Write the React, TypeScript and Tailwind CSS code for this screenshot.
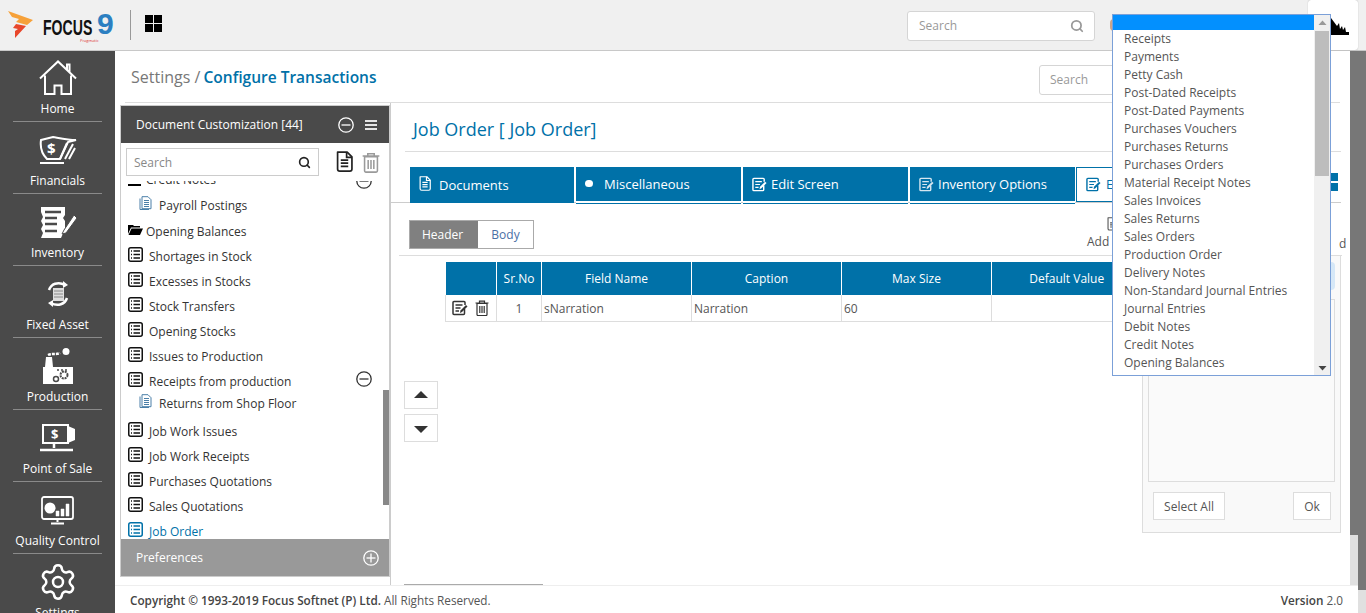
import { Settings, Search } from 'lucide-react'

const BLUE = 'bg-[#0071a8]'

const dropdownItems = [
  'Receipts', 'Payments', 'Petty Cash', 'Post-Dated Receipts', 'Post-Dated Payments', 'Purchases Vouchers',
  'Purchases Returns', 'Purchases Orders', 'Material Receipt Notes', 'Sales Invoices', 'Sales Returns', 'Sales Orders',
  'Production Order', 'Delivery Notes', 'Non-Standard Journal Entries', 'Journal Entries', 'Debit Notes', 'Credit Notes',
  'Opening Balances',
]

function ListIcon({ color = '#111' }: { color?: string }) {
  return (
    <svg width="15" height="15" viewBox="0 0 15 15" fill="none" stroke={color} className="shrink-0">
      <rect x="0.75" y="0.75" width="13.5" height="13.5" rx="2" strokeWidth="1.5" />
      <path d="M3 4h1M3 7.500h1M3 11h1M5.500 4H12M5.500 7.500H12M5.500 11H12" strokeWidth="1.3" />
    </svg>
  )
}

function PageIcon({ color = '#4a7fa8' }: { color?: string }) {
  return (
    <svg width="13" height="15" viewBox="0 0 13 15" fill="none" stroke={color} className="shrink-0">
      <path d="M1 13.500h9M1 13.500V2.500M3 .7h6l3 3v9H3z" strokeWidth="1" fill="#fff" />
      <path d="M5 4.500h5M5 6.500h5M5 8.500h5M5 10.500h5" strokeWidth="1" />
    </svg>
  )
}

function CircleSign({ plus = false, color = '#fff', size = 16 }: { plus?: boolean; color?: string; size?: number }) {
  return (
    <svg width={size} height={size} viewBox="0 0 16 16" fill="none" stroke={color} strokeWidth="1.3">
      <circle cx="8" cy="8" r="7.2" />
      <path d="M3.500 8h9" />
      {plus && <path d="M8 3.500v9" />}
    </svg>
  )
}

function DocIcon({ color = '#fff', size = 16 }: { color?: string; size?: number }) {
  return (
    <svg width={size} height={size * 1.25} viewBox="0 0 16 20" fill="none" stroke={color} strokeWidth="1.6">
      <path d="M1.500 1h9l4.500 4.500V17a2 2 0 0 1-2 2H3.500a2 2 0 0 1-2-2z" strokeLinejoin="round" />
      <path d="M10 1v5h5M4.500 8.500h7M4.500 11.500h7M4.500 14.500h7" />
    </svg>
  )
}

function EditIcon({ color = '#fff', size = 15 }: { color?: string; size?: number }) {
  return (
    <svg width={size} height={size} viewBox="0 0 16 16" fill="none" stroke={color}>
      <path d="M12.500 9v4.500a1 1 0 0 1-1 1H2a1 1 0 0 1-1-1V2.500a1 1 0 0 1 1-1h10a1 1 0 0 1 1 1V5" strokeWidth="1.5" />
      <path d="M3.500 5h7M3.500 8h5M3.500 11h3.500" strokeWidth="1.3" />
      <path d="M8 13l.5-2.500L14 5l1.500 1.500L10 12z" fill={color} stroke="none" />
    </svg>
  )
}

function TrashIcon({ color = '#333', width = 14, height = 16 }: { color?: string; width?: number; height?: number }) {
  return (
    <svg width={width} height={height} viewBox="0 0 14 16" fill="none" stroke={color}>
      <path d="M.5 3h13M4.500 3V1.200h5V3" strokeWidth="1.200" />
      <path d="M2 3.500h10v11a1 1 0 0 1-1 1H3a1 1 0 0 1-1-1z" strokeWidth="1.200" />
      <path d="M4.800 6v7M7 6v7M9.200 6v7" strokeWidth="1.200" />
    </svg>
  )
}

function NavIcon({ name }: { name: string }) {
  if (name === 'Home')
    return (
      <svg width="38" height="36" viewBox="0 0 38 36" fill="none" stroke="#fff" strokeWidth="2">
        <path d="M1 18.500 19 1.500l18 17M28 10V4.500h2.500V12M6 15.500V34h9.500v-8.500h7V34H32V15.500" />
      </svg>
    )
  if (name === 'Financials')
    return (
      <svg width="38" height="32" viewBox="0 0 38 32" fill="none">
        <path d="M2 6 14 3c6 1 15 3 23 3l-8 2-8 17H8C3 20 1 13 2 6z" stroke="#fff" strokeWidth="2" />
        <path d="M21 25 28 9M26 25l8-15M30 25l6-11" stroke="#fff" strokeWidth="2" />
        <text x="8" y="20" fill="#fff" fontSize="15" fontWeight="700" fontFamily="Open Sans">$</text>
        <path d="M1 29h24" stroke="#fff" strokeWidth="2" />
      </svg>
    )
  if (name === 'Inventory')
    return (
      <svg width="38" height="33" viewBox="0 0 38 33" fill="none">
        <path d="M2 1h24v8l-2 3 2 3v8l-4 9H2l2-5-2-4 2-4-2-4 2-4-2-5z" fill="#fff" />
        <path d="M6 6h16M6 12h12M6 18h12M6 25h12" stroke="#4a4a4a" strokeWidth="2.500" />
        <path d="M25 24 35 9l3 3-11 15-4 1z" fill="#fff" stroke="#4a4a4a" />
      </svg>
    )
  if (name === 'Fixed Asset')
    return (
      <svg width="24" height="28" viewBox="0 0 24 28" fill="none">
        <path d="M3 10C5 4 12 1 19 5M21 18c-2 6-9 9-16 5" stroke="#fff" strokeWidth="2.500" />
        <path d="M17 1l5 4-5 3zM7 27l-5-4 5-3z" fill="#fff" />
        <rect x="7" y="8" width="11" height="13" fill="#ddd" />
        <path d="M8 11h9M8 14h9M8 17h9" stroke="#888" />
      </svg>
    )
  if (name === 'Production')
    return (
      <svg width="30" height="36" viewBox="0 0 30 36" fill="none">
        <path d="M5 7c4-2 8 0 12-2" stroke="#fff" strokeWidth="2.500" strokeDasharray="3 1" />
        <circle cx="23" cy="3.500" r="3.500" fill="#fff" />
        <path d="M3 9h6l1 10h20v17H0V19h2z" fill="#fff" />
        <circle cx="21" cy="27" r="3.500" stroke="#4a4a4a" strokeWidth="2" strokeDasharray="2 .8" />
        <circle cx="13" cy="31" r="2.500" stroke="#4a4a4a" strokeWidth="1.500" />
        <path d="M14 22h2M18 22h2M22 22h2" stroke="#4a4a4a" strokeWidth="1.500" />
      </svg>
    )
  if (name === 'Point of Sale')
    return (
      <svg width="36" height="28" viewBox="0 0 36 28" fill="none">
        <rect x="3" y="1" width="25" height="18" stroke="#fff" strokeWidth="2" />
        <path d="M28 2l7 3v11l-7 3z" fill="#fff" />
        <path d="M14 20v4M0 26h33" stroke="#fff" strokeWidth="2.500" />
        <text x="11" y="15" fill="#fff" fontSize="13" fontWeight="700" fontFamily="Open Sans">$</text>
      </svg>
    )
  if (name === 'Quality Control')
    return (
      <svg width="33" height="29" viewBox="0 0 33 29" fill="none">
        <rect x="1" y="1" width="31" height="22" rx="2" stroke="#fff" strokeWidth="1.800" />
        <circle cx="9" cy="12" r="5.500" fill="#fff" />
        <path d="M9 12h5.500M15 20v-5h3v5zM20 20v-7h3v7zM25 20V8h3v12z" fill="#fff" stroke="#fff" strokeWidth=".5" />
        <path d="M16.500 23v3M10 27.500h13" stroke="#fff" strokeWidth="2" />
      </svg>
    )
  return <Settings size={40} color="#fff" strokeWidth={1.5} />
}

const navItems = ['Home', 'Financials', 'Inventory', 'Fixed Asset', 'Production', 'Point of Sale', 'Quality Control', 'Settings']

const treeItems: { label: string; kind: 'list' | 'page' | 'folder'; minus?: boolean; active?: boolean; extra?: string }[] = [
  { label: 'Payroll Postings', kind: 'page', extra: 'mb-[1px]' },
  { label: 'Opening Balances', kind: 'folder' },
  { label: 'Shortages in Stock', kind: 'list' },
  { label: 'Excesses in Stocks', kind: 'list' },
  { label: 'Stock Transfers', kind: 'list' },
  { label: 'Opening Stocks', kind: 'list' },
  { label: 'Issues to Production', kind: 'list' },
  { label: 'Receipts from production', kind: 'list', minus: true },
  { label: 'Returns from Shop Floor', kind: 'page', extra: '-mt-[3px] mb-[3px]' },
  { label: 'Job Work Issues', kind: 'list' },
  { label: 'Job Work Receipts', kind: 'list' },
  { label: 'Purchases Quotations', kind: 'list' },
  { label: 'Sales Quotations', kind: 'list' },
  { label: 'Job Order', kind: 'list', active: true },
]

function TreeRow({ item }: { item: (typeof treeItems)[number] }) {
  return (
    <div className={`flex items-center relative h-[25px] ${item.extra ?? ''} ${item.kind === 'page' ? 'pl-[18px]' : 'pl-[7px]'} ${item.active ? 'text-[#0071a8]' : 'text-[#333]'}`}>
      {item.kind === 'list' && <ListIcon color={item.active ? '#0071a8' : '#111'} />}
      {item.kind === 'page' && <PageIcon />}
      {item.kind === 'folder' && (
        <svg width="15" height="11" viewBox="0 0 15 11" className="shrink-0">
          <path d="M0 1h5l1 1h6v1.500H3L0 10zM3.500 4.500H15L12 11H.5z" fill="#000" />
        </svg>
      )}
      <span className={`pt-[5px] ${item.kind === 'folder' ? 'ml-[3px]' : item.kind === 'page' ? 'ml-[7px]' : 'ml-[6px]'}`}>{item.label}</span>
      {item.minus && (
        <span className="absolute right-[17px] top-[4px]">
          <CircleSign color="#333" />
        </span>
      )}
    </div>
  )
}

const tabs = [
  { label: 'Miscellaneous', icon: <span className="block w-[8px] h-[7px] -mt-[2px] rounded-full bg-white" />, gap: 'ml-[11px]' },
  { label: 'Edit Screen', icon: <EditIcon />, gap: 'ml-[4px]' },
  { label: 'Inventory Options', icon: <EditIcon color="#d5e6f0" />, gap: 'ml-[4px]' },
]

export default function App() {
  return (
    <div className="relative flex flex-col w-[1366px] h-[613px] overflow-hidden bg-white text-[12px] text-[#555] font-['Open_Sans',sans-serif]">
      <header className="flex items-center h-[51px] shrink-0 bg-[#f0f0f0] border-b border-[#c8c8c8]">
        <svg width="26" height="28" viewBox="0 0 26 28" className="ml-[8px] -mt-[1px] shrink-0">
          <path d="M0 0l25 9-6 5-11-3 3-3-7-2z" fill="#f6a13a" />
          <path d="M8 13l10 2-11 12 0-7 3-2-5-1z" fill="#e8472b" />
        </svg>
        <div className="relative flex items-center w-[87px] ml-[9px] h-[40px] leading-none">
          <span className="block w-[49px] mt-[6px] font-['Liberation_Sans',sans-serif] font-bold text-[22px] text-[#111] scale-x-[0.64] origin-left whitespace-nowrap">FOCUS</span>
          <span className="block ml-[5px] -mt-[3px] font-['Liberation_Sans',sans-serif] font-bold text-[30px] text-[#2c7fc1]">9</span>
          <span className="absolute left-[37px] top-[34px] text-[4px] text-[#d33] whitespace-nowrap">Pragmatic</span>
        </div>
        <div className="w-px h-[30px] bg-[#999]" />
        <div className="grid grid-cols-2 gap-[1px] ml-[14px] -mt-[3px]">
          <span className="w-[8px] h-[8px] bg-black" />
          <span className="w-[8px] h-[8px] bg-black" />
          <span className="w-[8px] h-[8px] bg-black" />
          <span className="w-[8px] h-[8px] bg-black" />
        </div>
        <div className="ml-[745px] flex items-center justify-between w-[188px] h-[30px] mt-[1px] pl-[11px] pr-[10px] bg-white border border-[#d5d5d5] rounded-[3px] text-[#999]">
          <span className="pt-[1px]">Search</span>
          <Search size={14} strokeWidth={3} color="#999" />
        </div>
        <span className="ml-[15px] w-[8px] h-[12px] rounded-full bg-[#c9a48a]" />
        <div className="ml-auto mr-[8px] w-[50px] h-[50px] flex items-end justify-end pb-[14px] pr-[8px] bg-white rounded-[3px] shadow-[0_0_1px_#999]">
          <svg width="22" height="24" viewBox="0 0 22 24">
            <path d="M0 23V2l6 8 3 4 2-3 1 6 2-3 1 4 2-3 1 5 3 0v3z" fill="#000" />
          </svg>
        </div>
      </header>

      <div className="flex flex-1 min-h-0">
        <aside className="w-[115px] shrink-0 bg-[#4a4a4a] overflow-hidden text-white text-[12px]">
          <div className="-mt-[1px]">
            {navItems.map((name) => (
              <div key={name} className="flex flex-col items-center h-[72px] mx-[13px] border-b border-[#8a8a8a]">
                <div className="flex items-center justify-center h-[50px] pt-[6px]">
                  <NavIcon name={name} />
                </div>
                <span className="leading-[18px] whitespace-nowrap">{name}</span>
              </div>
            ))}
          </div>
        </aside>

        <div className="flex flex-col flex-1 min-w-0">
          <div className="flex flex-1 min-h-0">
            <main className="flex flex-col w-[1235px] shrink-0 min-h-0">
              <div className="flex items-center justify-between h-[52px] shrink-0 mx-[10px] pl-[6px] border-b border-[#ddd]">
                <div className="text-[16px] pt-[1px]">
                  <span className="text-[#777]">Settings / </span>
                  <span className="text-[#0071a8] font-semibold text-[15.5px] -ml-[1px]">Configure Transactions</span>
                </div>
                <div className="flex items-center w-[200px] h-[30px] pt-[1px] px-[10px] mr-[101px] mt-[6px] border border-[#d5d5d5] rounded-[3px] text-[#999]">Search</div>
              </div>

              <div className="flex flex-1 min-h-0">
                <section className="flex flex-col w-[270px] h-[472px] ml-[5px] mt-[2px] shrink-0 border border-[#ccc]">
                  <div className="flex items-center h-[37px] shrink-0 pl-[15px] pr-[12px] bg-[#4a4a4a] text-white">
                    <span className="pt-[1px]">Document Customization [44]</span>
                    <span className="ml-auto"><CircleSign /></span>
                    <span className="ml-[11px] flex flex-col gap-[2px]">
                      <i className="block w-[12px] h-[2px] bg-[#e5e5e5]" />
                      <i className="block w-[12px] h-[2px] bg-[#e5e5e5]" />
                      <i className="block w-[12px] h-[2px] bg-[#e5e5e5]" />
                    </span>
                  </div>
                  <div className="flex items-center h-[38px] shrink-0 pl-[5px]">
                    <div className="flex items-center justify-between w-[193px] h-[28px] px-[7px] border border-[#ccc] text-[#888]">
                      <span className="pt-[1px]">Search</span>
                      <Search size={13} strokeWidth={3} color="#222" />
                    </div>
                    <span className="ml-[17px]"><DocIcon color="#222" size={17} /></span>
                    <span className="ml-[9px]"><TrashIcon color="#9a9a9a" width={18} height={21} /></span>
                  </div>
                  <div className="relative flex-1 min-h-0 overflow-hidden">
                    <div className="absolute right-0 top-[209px] w-[6px] h-[115px] bg-[#888]" />
                    <div className="absolute top-[-11px] left-[7px] right-0 flex items-center h-[20px]">
                      <span className="block w-[13px] h-[2px] mt-[9px] bg-black" />
                      <span className="ml-[5px] text-[#333] whitespace-nowrap">Credit Notes</span>
                    </div>
                    <span className="absolute right-[17px] top-[-8px]"><CircleSign color="#333" /></span>
                    <div className="pt-[10px]">
                      {treeItems.map((item) => (
                        <TreeRow key={item.label} item={item} />
                      ))}
                    </div>
                  </div>
                  <div className="flex items-center justify-between h-[37px] shrink-0 pl-[15px] pr-[10px] bg-[#999] text-white">
                    <span className="pt-[1px]">Preferences</span>
                    <CircleSign plus />
                  </div>
                </section>

                <div className="flex flex-col flex-1 min-w-0 border-l border-[#ccc]">
                  <div className="flex items-center h-[49px] shrink-0 ml-[14px] mr-[9px] pl-[8px] pt-[4px] border-b border-[#ddd] text-[18px] text-[#0071a8]">
                    Job Order [ Job Order]
                  </div>

                  <div className="flex items-stretch h-[36px] mt-[15px] shrink-0 border-b border-[#ccc] mr-[9px] text-[13px] text-white">
                    <div className={`flex items-center w-[164px] h-[36px] ml-[19px] pl-[9px] ${BLUE}`}>
                      <span className="-mt-[3px]"><DocIcon size={12} /></span>
                      <span className="ml-[8px] pt-[2px]">Documents</span>
                    </div>
                    {tabs.map((tab) => (
                      <div key={tab.label} className={`flex items-center w-[165px] h-[34px] ml-[2px] pl-[9px] ${BLUE} shadow-[0_2px_0_#fff,0_3px_0_#0071a8]`}>
                        {tab.icon}
                        <span className={`${tab.gap} pt-[1px]`}>{tab.label}</span>
                      </div>
                    ))}
                    <div className="flex items-center w-[165px] h-[35px] ml-[1px] pl-[9px] bg-white border border-[#0071a8] text-[#0071a8]">
                      <EditIcon color="#0071a8" />
                      <span className="ml-[5px] pt-[1px]">Edit</span>
                    </div>
                    <div className="flex flex-col gap-[2px] ml-[90px] mt-[6px]">
                      <span className="block w-[7px] h-[8px] bg-[#0071a8]" />
                      <span className="block w-[7px] h-[8px] bg-[#0071a8]" />
                    </div>
                  </div>

                  <div className="flex items-start h-[52px] shrink-0 pl-[18px] pt-[17px] mr-[9px]">
                    <div className="flex h-[29px] border border-[#aaa]">
                      <span className="flex items-center justify-center w-[68px] pt-[1px] pr-[3px] bg-[#808080] text-white">Header</span>
                      <span className="flex items-center justify-center w-[55px] pt-[1px] bg-white text-[#4a6fa5]">Body</span>
                    </div>
                    <div className="flex flex-col items-start ml-[553px] -mt-[3px]">
                      <span className="ml-[20px]"><DocIcon color="#555" size={11} /></span>
                      <span className="mt-[2px]">Add</span>
                    </div>
                    <span className="ml-[221px] mt-[15px]">d</span>
                  </div>

                  <div className="flex flex-1 min-h-0 ml-[8px] mr-[8px] border-t border-[#ddd]">
                    <div className="flex w-[743px] shrink-0 pl-[5px]">
                      <div className="flex flex-col gap-[5px] mt-[125px] shrink-0">
                        {['M1 10 8 3l7 7z', 'M1 5h14l-7 7z'].map((d) => (
                          <div key={d} className="flex items-center justify-center w-[34px] h-[28px] border border-[#ddd]">
                            <svg width="16" height="14" viewBox="0 0 16 14"><path d={d} fill="#333" /></svg>
                          </div>
                        ))}
                      </div>
                      <table className="ml-[7px] mt-[6px] h-fit w-[696px] table-fixed border-collapse">
                        <colgroup>
                          <col className="w-[51px]" />
                          <col className="w-[45px]" />
                          <col className="w-[150px]" />
                          <col className="w-[150px]" />
                          <col className="w-[150px]" />
                          <col className="w-[150px]" />
                        </colgroup>
                        <thead>
                          <tr className={`h-[33px] ${BLUE} text-white`}>
                            {['', 'Sr.No', 'Field Name', 'Caption', 'Max Size', 'Default Value'].map((h) => (
                              <th key={h} className="pt-[1px] font-medium border-r border-white last:border-r-0 whitespace-nowrap">{h}</th>
                            ))}
                          </tr>
                        </thead>
                        <tbody>
                          <tr className="h-[26px] border-b border-x border-[#ddd]">
                            <td className="border-r border-[#ddd]">
                              <div className="flex items-center gap-[7px] pl-[6px]">
                                <EditIcon color="#333" size={16} />
                                <TrashIcon />
                              </div>
                            </td>
                            <td className="pt-[2px] text-center border-r border-[#ddd]">1</td>
                            <td className="pt-[2px] pl-[2px] border-r border-[#ddd]">sNarration</td>
                            <td className="pt-[2px] pl-[2px] border-r border-[#ddd]">Narration</td>
                            <td className="pt-[2px] pl-[2px] border-r border-[#ddd]">60</td>
                            <td />
                          </tr>
                        </tbody>
                      </table>
                    </div>

                    <div className="flex flex-col w-[199px] h-[277px] shrink-0 bg-[#f9f9f9] border-x border-b border-[#ddd]">
                      <div className="h-[28px] mt-[6px] mx-[5px] bg-[linear-gradient(90deg,#fff,#d5e7f7)] rounded-[4px]" />
                      <div className="h-[183px] mt-[9px] mx-[5px] bg-[#fafafa] border border-[#ddd]" />
                      <div className="flex justify-between mt-[10px] ml-[10px] mr-[9px]">
                        <span className="flex items-center justify-center w-[72px] h-[28px] pt-[2px] border border-[#ddd] bg-white">Select All</span>
                        <span className="flex items-center justify-center w-[38px] h-[28px] pt-[2px] border border-[#ddd] bg-white">Ok</span>
                      </div>
                    </div>
                  </div>

                  <div className="h-px w-[139px] ml-[13px] bg-[#aaa] shrink-0" />
                </div>
              </div>
            </main>
            <div className="flex flex-col justify-start w-[8px] shrink-0 bg-[#e0e0e0]">
              <div className="h-[484px] bg-[#777]" />
            </div>
          </div>
          <footer className="flex items-center justify-between h-[28px] shrink-0 pl-[15px] pr-[15px] pt-[2px] border-t border-[#eee] bg-white text-[11.75px]">
            <span><b className="font-semibold text-[#444]">Copyright © 1993-2019 Focus Softnet (P) Ltd.</b> All Rights Reserved.</span>
            <span><b className="font-semibold text-[#444]">Version</b> 2.0</span>
          </footer>
        </div>

        <div className="w-[8px] shrink-0 bg-[#e0e0e0]">
          <div className="h-[539px] bg-[#777]" />
        </div>
      </div>

      <div className="absolute left-[1112px] top-[14px] flex w-[219px] h-[362px] bg-white border border-[#7ba0d8] overflow-hidden">
        <div className="flex-1 min-w-0">
          <div className="h-[15px] bg-[#0390fe]" />
          {dropdownItems.map((item) => (
            <div key={item} className="flex items-center h-[18px] pl-[11px] whitespace-nowrap">{item}</div>
          ))}
        </div>
        <div className="flex flex-col items-center w-[16px] shrink-0 bg-[#f0f0f0]">
          <svg width="9" height="16" viewBox="0 0 9 16" className="shrink-0"><path d="M.5 10 4.500 5.500 8.500 10z" fill="#9a9a9a" /></svg>
          <div className="w-[14px] h-[145px] bg-[#bdbdbd]" />
          <svg width="9" height="16" viewBox="0 0 9 16" className="mt-auto shrink-0"><path d="M.5 7 4.500 11.500 8.500 7z" fill="#444" /></svg>
        </div>
      </div>
    </div>
  )
}
